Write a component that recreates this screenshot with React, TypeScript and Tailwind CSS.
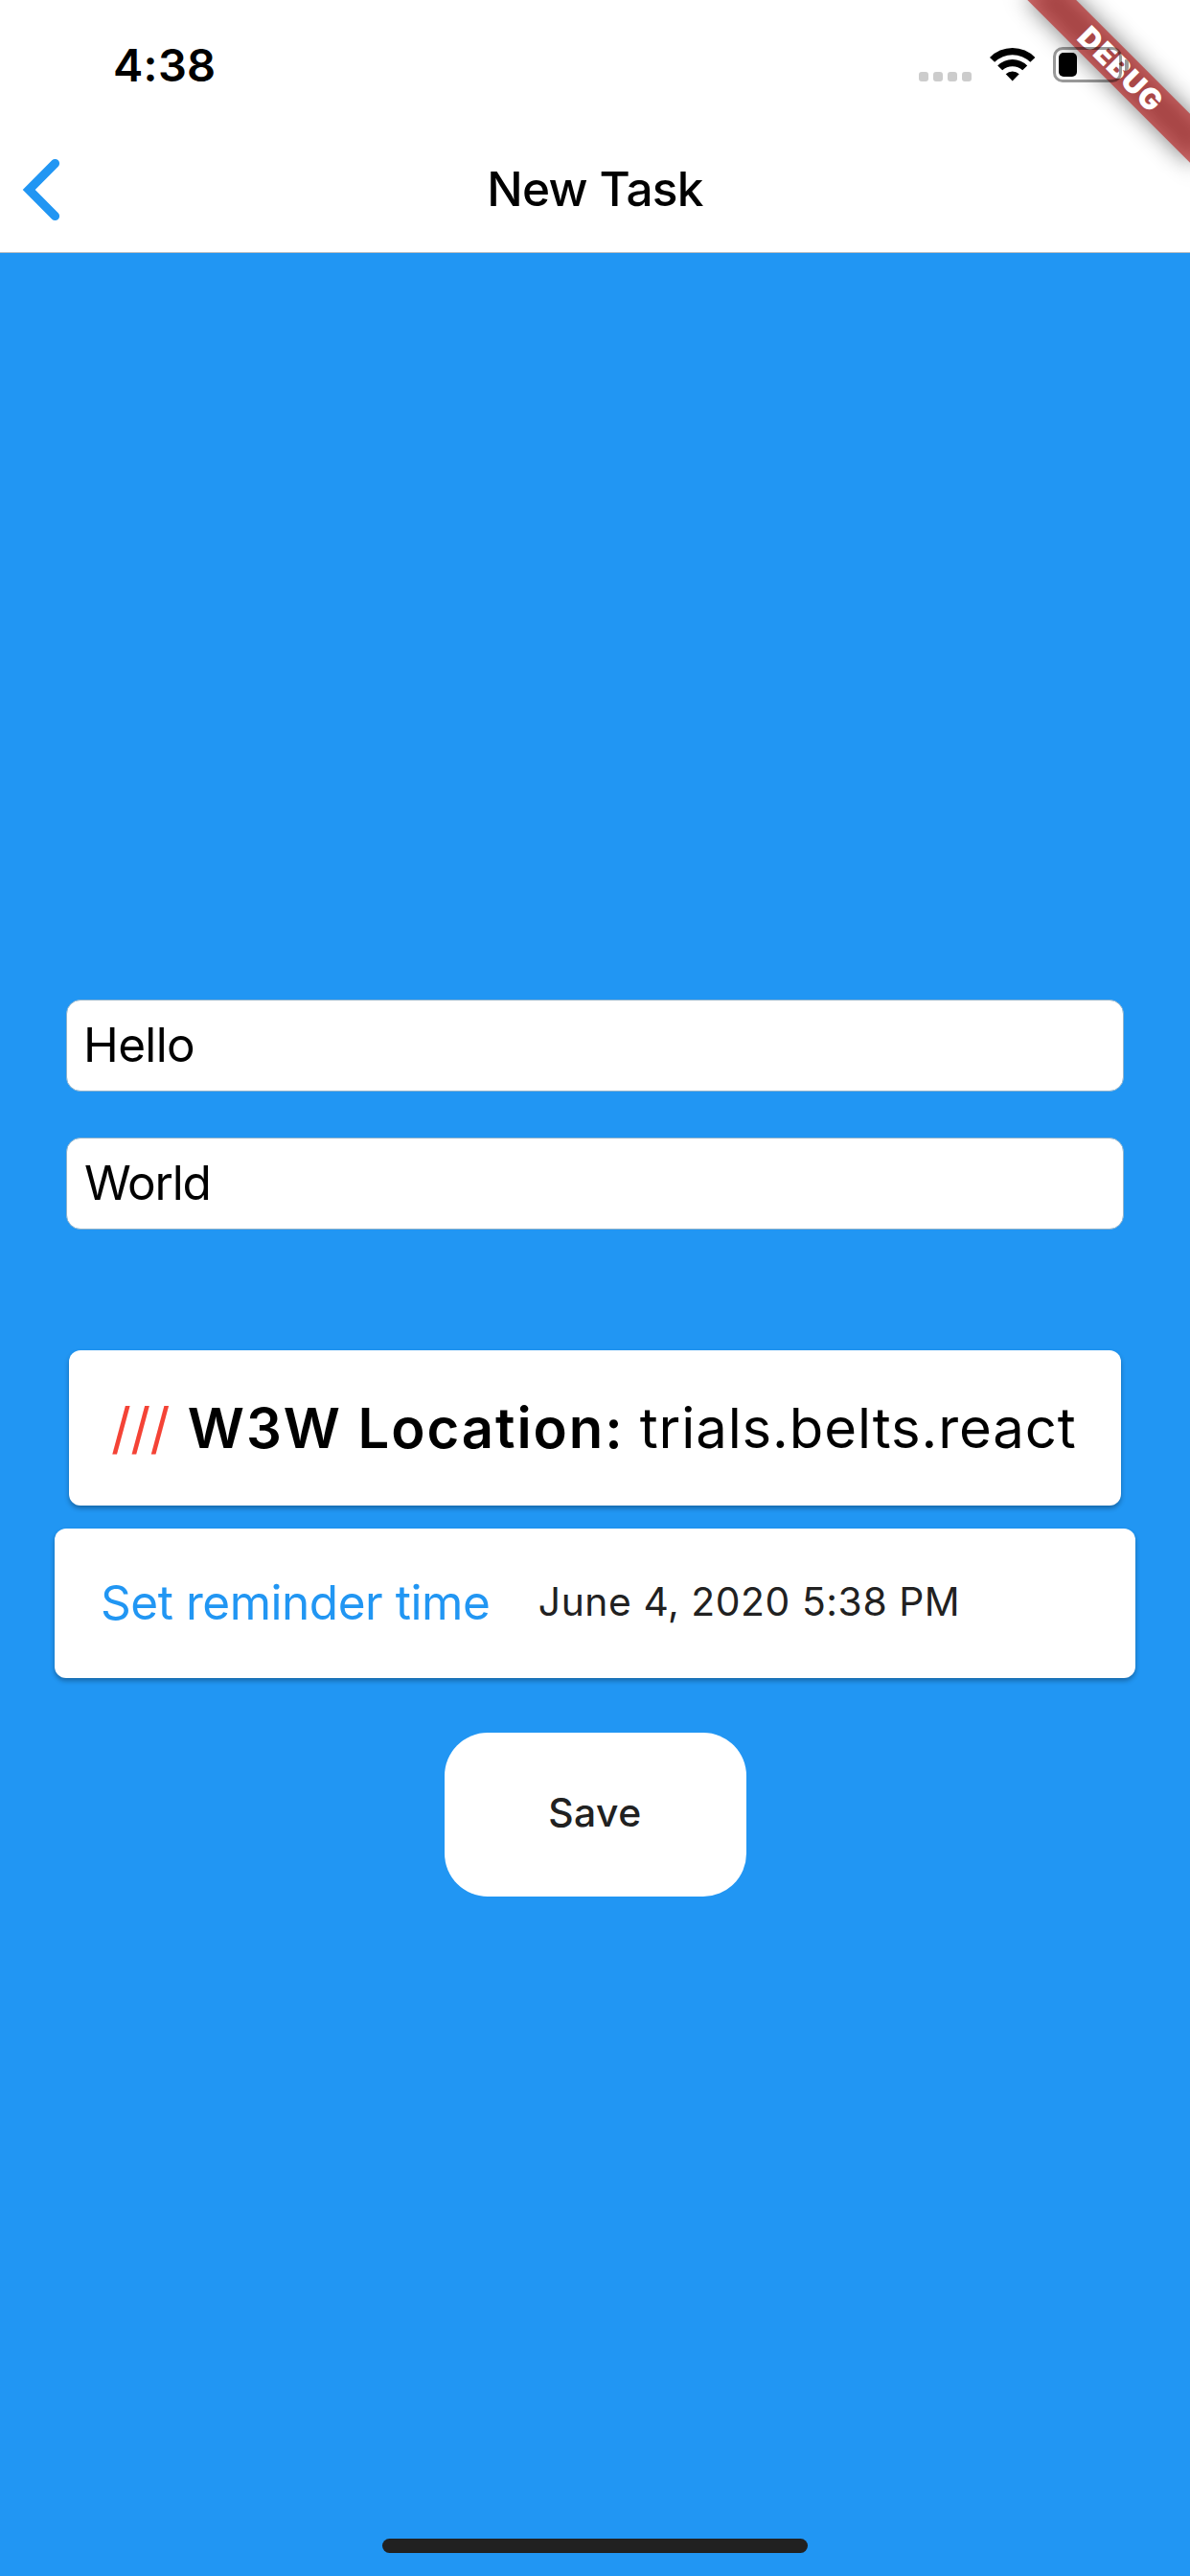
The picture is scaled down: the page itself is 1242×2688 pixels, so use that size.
function DebugBanner() {
  return (
    <div className="pointer-events-none absolute top-0 right-0 size-0 rotate-45">
      <div className="absolute top-[84px] -left-[120px] h-9 w-60 bg-black/50 blur-[12px]" />
      <div className="absolute top-[84px] -left-[120px] flex h-9 w-60 items-center justify-center bg-[#b71c1c]/63 text-[30.6px] leading-none font-black tracking-[0.9px] text-white">
        DEBUG
      </div>
    </div>
  );
}

function SignalDots() {
  return (
    <div className="mt-[75px] flex gap-[5px]">
      <span className="size-2.5 rounded-[3px] bg-[#cccccc]" />
      <span className="size-2.5 rounded-[3px] bg-[#cccccc]" />
      <span className="size-2.5 rounded-[3px] bg-[#cccccc]" />
      <span className="size-2.5 rounded-[3px] bg-[#cccccc]" />
    </div>
  );
}

function WifiIcon() {
  return (
    <svg className="mt-[49px] ml-[19px] h-9 w-12" viewBox="0 0 48 36">
      <path d="M0 11 A33 33 0 0 1 47.4 11 L42.3 15.8 A26.5 26.5 0 0 0 5.1 15.8 Z" />
      <path d="M8.2 19.5 A22 22 0 0 1 39.2 19.5 L34.2 24.3 A15.5 15.5 0 0 0 13.2 24.3 Z" />
      <path d="M16.7 28.2 A10.6 10.6 0 0 1 30.7 28.2 L23.7 35.6 Z" />
    </svg>
  );
}

function BatteryIcon() {
  return (
    <div className="mt-[49px] ml-[18px] flex items-center">
      <div className="h-[37px] w-[72px] rounded-[10px] border-3 border-black/40 p-[3px]">
        <div className="h-[25px] w-[19px] rounded-[5px] bg-black" />
      </div>
      <div className="ml-[3px] h-3 w-1 rounded-r-full bg-black/40" />
    </div>
  );
}

export default function App() {
  return (
    <div className="relative flex h-[2688px] w-[1242px] flex-col overflow-hidden bg-[#2196f3] font-[Inter,sans-serif] text-black">
      <header className="h-[264px] shrink-0 border-b border-[#b9bec3] bg-white">
        <div className="flex h-[132px] items-start justify-between">
          <div className="mt-11 ml-[118px] text-[47px] leading-12 font-semibold tracking-[0.3px]">4:38</div>
          <div className="relative z-10 mr-[64px] flex items-start">
            <SignalDots />
            <WifiIcon />
            <BatteryIcon />
          </div>
        </div>
        <div className="grid h-[132px] grid-cols-[1fr_auto_1fr] items-center">
          <svg className="ml-[23px] h-[66px] w-10" viewBox="0 0 40 66" fill="none">
            <path d="M34.5 5.5 L7.2 33 L34.5 60.5" stroke="#2196f3" strokeWidth="9.2" strokeLinecap="round" />
          </svg>
          <h1 className="text-[49.5px] leading-none font-medium tracking-[-0.7px]">New Task</h1>
        </div>
      </header>
      <DebugBanner />

      <main className="flex grow flex-col items-center pt-[778.5px]">
        <div className="flex h-24 w-[1104px] items-center rounded-[15px] border border-[#90b3cc] bg-white pl-[17px] text-[49.5px] leading-none tracking-[-0.66px]">
          Hello
        </div>
        <div className="mt-12 flex h-24 w-[1104px] items-center rounded-[15px] border border-[#90b3cc] bg-white pl-[18px] text-[49.5px] leading-none tracking-[-1.21px]">
          World
        </div>

        <div className="mt-[126px] flex h-[162px] w-[1098px] items-center rounded-xl bg-white pl-11 text-[58px] leading-none shadow-[0_3px_5px_rgba(0,0,0,0.3)]">
          <span className="tracking-[-0.65px] text-[#f44336]">///</span>
          <span className="ml-[19px] font-semibold tracking-[1.95px]">W3W Location:</span>
          <span className="ml-[16px] tracking-[0.91px]">trials.belts.react</span>
        </div>
        <div className="mt-6 flex h-[156px] w-[1128px] items-center rounded-xl bg-white pl-[48px] leading-none shadow-[0_3px_5px_rgba(0,0,0,0.3)]">
          <span className="text-[49.5px] tracking-[-0.46px] text-[#2196f3]">Set reminder time</span>
          <span className="-mt-0.5 ml-[50.5px] text-[40.8px] tracking-[0.57px] text-[#212121]">June 4, 2020 5:38 PM</span>
        </div>

        <button className="mt-[57px] flex h-[171px] w-[315px] items-center justify-center rounded-[45px] bg-white pb-[3px] text-[40.8px] leading-none font-medium tracking-[0.48px] text-[#212121]">
          Save
        </button>

        <div className="mt-auto mb-6 h-[15px] w-[444px] rounded-full bg-[#212121]" />
      </main>
    </div>
  );
}
